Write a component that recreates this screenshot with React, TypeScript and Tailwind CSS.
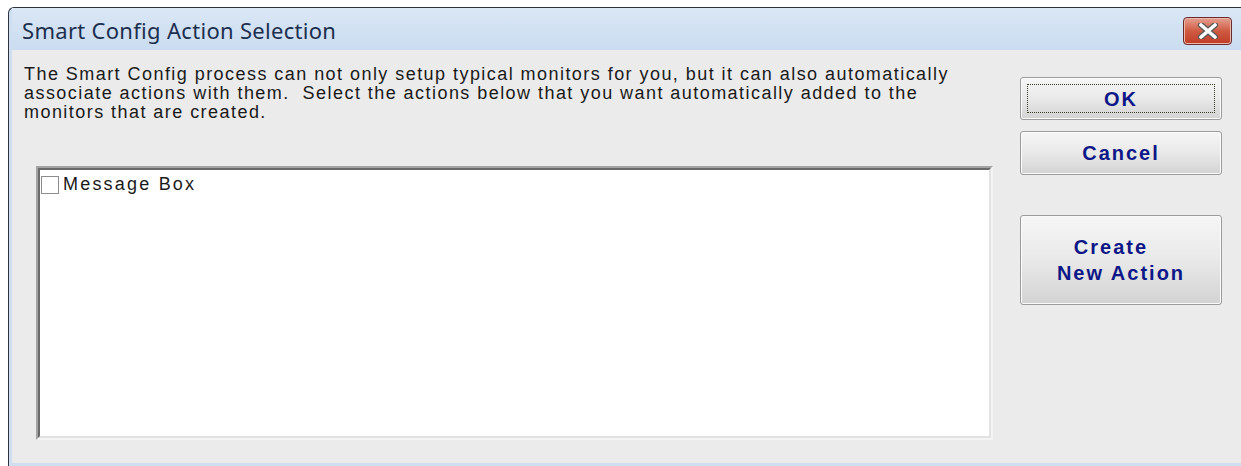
import React from "react";

function CloseGlyph() {
  return (
    <svg width="22" height="16" viewBox="0 0 22 16" aria-hidden="true">
      <path d="M4 2 L18 14 M18 2 L4 14" stroke="#5a5a5a" strokeWidth="6.2" strokeLinecap="round" fill="none" />
      <path d="M4 2 L18 14 M18 2 L4 14" stroke="#ffffff" strokeWidth="3.6" strokeLinecap="round" fill="none" />
    </svg>
  );
}

function DialogButton({
  children,
  className = "",
  focused = false,
}: {
  children: React.ReactNode;
  className?: string;
  focused?: boolean;
}) {
  return (
    <button
      type="button"
      className={
        "relative flex w-[202px] items-center justify-center rounded-[3px] border border-[#9c9c9c] bg-gradient-to-b from-[#f6f6f6] via-[#e9e9e9] to-[#d3d3d3] text-[20px] font-bold leading-[26px] tracking-[2px] text-[#0d1787] shadow-[inset_0_0_0_1px_#fbfbfb] " +
        className
      }
      style={{ fontFamily: '"Liberation Sans", Arial, sans-serif' }}
    >
      {focused && (
        <span className="pointer-events-none absolute inset-x-[6px] inset-y-[6px] border border-dotted border-[#3a3a20]" />
      )}
      {children}
    </button>
  );
}

export default function App() {
  const body = { fontFamily: '"Liberation Sans", Arial, sans-serif' };
  return (
    <div className="flex h-[466px] w-[1241px] overflow-hidden bg-white pl-[8px] pt-[7px]">
      <div className="flex flex-1 flex-col rounded-tl-[6px] border-l border-t border-[#2d3440] bg-[#cfdff1] pb-[3px] pl-[3px]">
        {/* title bar */}
        <div className="flex h-[42px] items-start bg-gradient-to-b from-[#dae7f5] to-[#cadcf0]">
          <div
            className="pl-[10px] pt-[11px] text-[22px] leading-[22px] tracking-[0.3px] text-[#1c2f4f]"
            style={{ fontFamily: '"Noto Sans", "Open Sans", sans-serif' }}
          >
            Smart Config Action Selection
          </div>
          <div className="ml-auto mr-[9px] mt-[9px] flex h-[28px] w-[49px] items-center justify-center rounded-[4px] border border-[#6b2a2e] bg-gradient-to-b from-[#e3a090] via-[#cf5a42] to-[#c03c25] shadow-[inset_0_0_0_1px_#eab8ac]">
            <CloseGlyph />
          </div>
        </div>

        {/* client area */}
        <div className="flex flex-1 bg-[#ebebeb]" style={body}>
          <div className="flex w-[981px] flex-col pl-[12px] pt-[15px]">
            <div className="whitespace-pre text-[18px] leading-[19px] tracking-[1.45px] text-[#1a1a1a]">
              <div>The Smart Config process can not only setup typical monitors for you, but it can also automatically</div>
              <div>associate actions with them.  Select the actions below that you want automatically added to the</div>
              <div>monitors that are created.</div>
            </div>
            <div className="ml-[12px] mt-[44px] h-[274px] w-[957px] border-2 border-b-[#f4f4f4] border-l-[#a3a3a3] border-r-[#f4f4f4] border-t-[#a3a3a3]">
              <div className="h-full border-2 border-b-[#e2e2e2] border-l-[#6a6a6a] border-r-[#e2e2e2] border-t-[#6a6a6a] bg-white pl-[1px] pt-[5px]">
                <label className="flex items-center gap-[4px]">
                  <span className="h-[18px] w-[18px] border border-[#8d8d8d] bg-white" />
                  <span className="text-[18px] leading-[19px] tracking-[2.2px] text-[#1a1a1a]">Message Box</span>
                </label>
              </div>
            </div>
          </div>

          <div className="ml-[27px] flex flex-col pt-[27px]">
            <DialogButton focused className="h-[43px]">OK</DialogButton>
            <DialogButton className="mt-[11px] h-[44px]">Cancel</DialogButton>
            <DialogButton className="mt-[40px] h-[90px]">
              <span className="flex flex-col items-center">
                <span className="pr-[20px]">Create</span>
                <span>New Action</span>
              </span>
            </DialogButton>
          </div>
        </div>
      </div>
    </div>
  );
}
